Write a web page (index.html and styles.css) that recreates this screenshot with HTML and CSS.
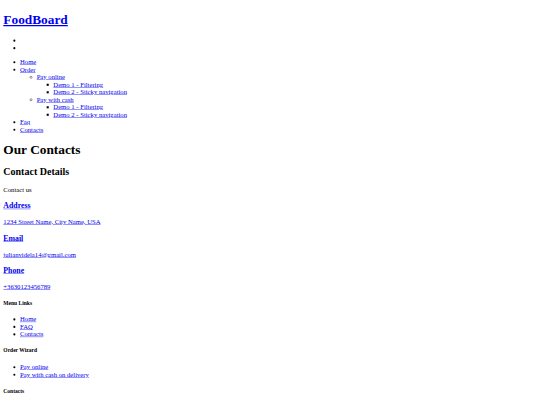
FILE: index.html
```html
<!DOCTYPE html>
<html>
<head>
<meta charset="utf-8">
<title>FoodBoard</title>
<link rel="stylesheet" href="styles.css">
</head>
<body class="page">
<div class="frame">
<header class="site-header">
<h1 class="logo"><a href="#">FoodBoard</a></h1>
<ul class="icons"><li></li><li></li></ul>
<ul class="nav">
<li><a href="#">Home</a></li>
<li><a href="#">Order</a>
<ul>
<li><a href="#">Pay online</a>
<ul>
<li><a href="#">Demo 1 - Filtering</a></li>
<li><a href="#">Demo 2 - Sticky navigation</a></li>
</ul>
</li>
<li><a href="#">Pay with cash</a>
<ul>
<li><a href="#">Demo 1 - Filtering</a></li>
<li><a href="#">Demo 2 - Sticky navigation</a></li>
</ul>
</li>
</ul>
</li>
<li><a href="#">Faq</a></li>
<li><a href="#">Contacts</a></li>
</ul>
</header>
<main class="content">
<h1>Our Contacts</h1>
<h2>Contact Details</h2>
<p>Contact us</p>
<h3><a href="#">Address</a></h3>
<p><a href="#">1234 Street Name, City Name, USA</a></p>
<h3><a href="#">Email</a></h3>
<p><a href="#">julianvidela14@gmail.com</a></p>
<h3><a href="#">Phone</a></h3>
<p><a href="#">+3630123456789</a></p>
</main>
<footer class="footer">
<h5>Menu Links</h5>
<ul>
<li><a href="#">Home</a></li>
<li><a href="#">FAQ</a></li>
<li><a href="#">Contacts</a></li>
</ul>
<h5>Order Wizard</h5>
<ul>
<li><a href="#">Pay online</a></li>
<li><a href="#">Pay with cash on delivery</a></li>
</ul>
<h5>Contacts</h5>
</footer>
</div>
</body>
</html>
```
FILE: styles.css
```css
.page {
  margin: 0;
  overflow: hidden;
  width: 540px;
  height: 405px;
}
.frame {
  width: 1280px;
  padding: 8px;
  transform: scale(0.41667);
  transform-origin: 0 0;
  font-family: "Liberation Serif", "Times New Roman", serif;
}
```
